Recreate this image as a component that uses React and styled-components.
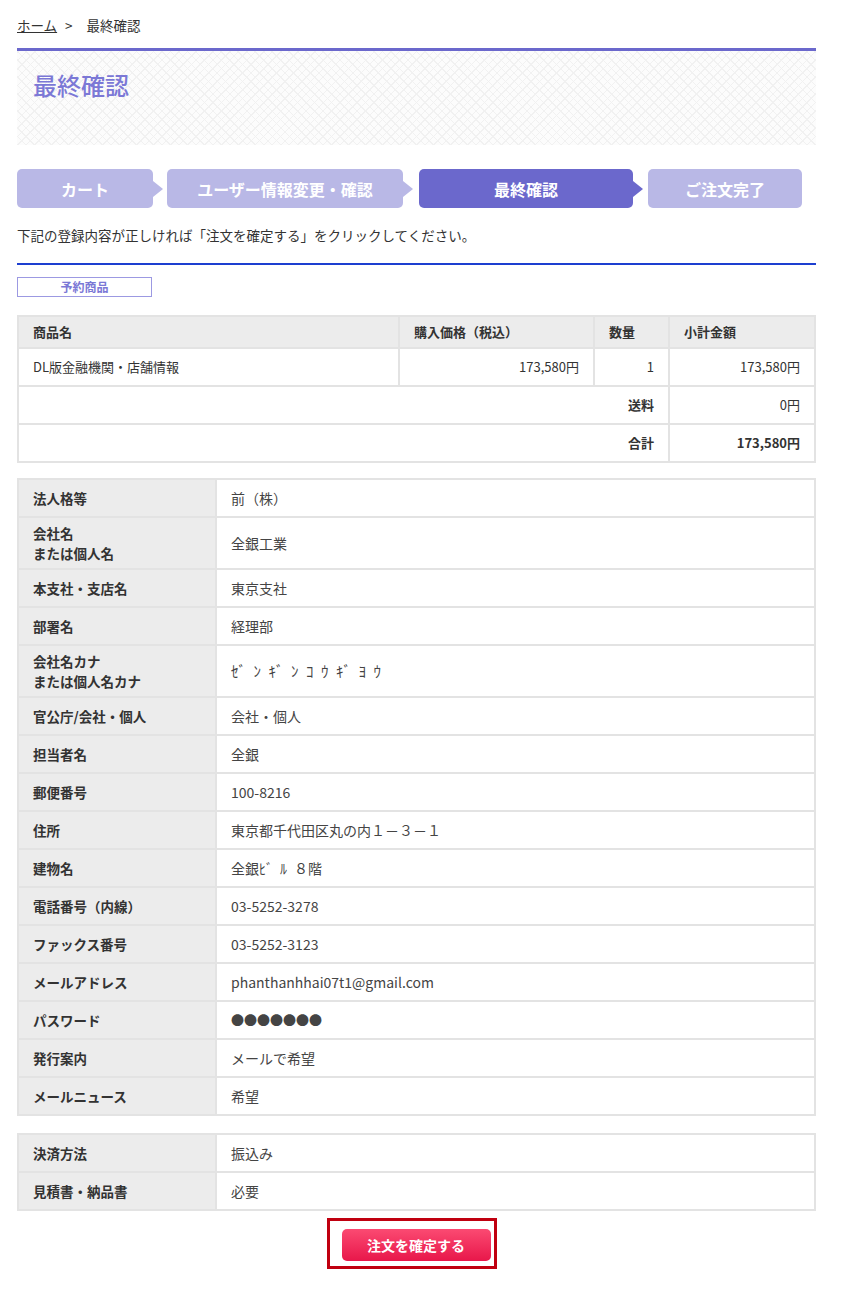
import styled, { createGlobalStyle } from "styled-components";

const GlobalStyle = createGlobalStyle`
  body {
    margin: 0;
    background: #fff;
    color: #333;
    font-family: "Noto Sans CJK JP", "Noto Sans", sans-serif;
  }
`;

const Page = styled.div`
  width: 799px;
  margin-left: 17px;
  padding-bottom: 26px;
`;

const Breadcrumb = styled.div`
  padding-top: 15px;
  font-size: 13.5px;
  line-height: 20px;
  color: #333;
  display: flex;
  gap: 8px;
  a {
    color: #333;
    text-decoration: underline;
  }
  span + span {
    margin-left: 6px;
  }
`;

const TitleBox = styled.div`
  margin-top: 13px;
  height: 97px;
  border-top: 3px solid #6b68cc;
  background-color: #fcfcfc;
  background-image: repeating-linear-gradient(45deg, #f1f1f1 0 1px, transparent 1px 6px),
    repeating-linear-gradient(-45deg, #f1f1f1 0 1px, transparent 1px 6px);
  padding: 18px 16px 0;
  box-sizing: border-box;
`;

const Title = styled.h1`
  margin: 0;
  font-size: 24px;
  line-height: 32px;
  font-weight: 500;
  color: #7b78d6;
`;

const Steps = styled.div`
  display: flex;
  margin-top: 24px;
  height: 39px;
`;

const Step = styled.div`
  position: relative;
  width: ${(p) => p.$w}px;
  margin-right: ${(p) => p.$gap}px;
  border-radius: 5px;
  background: ${(p) => (p.$active ? "#6b68cc" : "#b9b8e6")};
  color: #fff;
  font-weight: 700;
  font-size: 16px;
  display: flex;
  align-items: center;
  justify-content: center;
  &::after {
    content: "";
    display: ${(p) => (p.$last ? "none" : "block")};
    position: absolute;
    right: -10px;
    top: 50%;
    margin-top: -8px;
    border-style: solid;
    border-width: 8px 0 8px 10px;
    border-color: transparent transparent transparent
      ${(p) => (p.$active ? "#6b68cc" : "#b9b8e6")};
  }
`;

const Note = styled.p`
  margin: 17px 0 0;
  font-size: 13.5px;
  line-height: 20px;
`;

const BlueLine = styled.hr`
  margin: 18px 0 0;
  border: 0;
  height: 2px;
  background: #1d3fd0;
`;

const Tag = styled.div`
  margin-top: 12px;
  width: 135px;
  height: 20px;
  box-sizing: border-box;
  border: 1px solid #9c99e2;
  color: #7b78d6;
  font-size: 12px;
  font-weight: 700;
  line-height: 18px;
  text-align: center;
`;

const Table = styled.table`
  width: 100%;
  border-collapse: collapse;
  margin-top: ${(p) => p.$mt}px;
  font-size: ${(p) => p.$fs || 14}px;
  td,
  th {
    border: 2px solid #e3e3e3;
    padding: 5px 14px;
    line-height: 20px;
    vertical-align: middle;
  }
  tr {
    height: 38px;
  }
`;

const Head = styled.tr`
  && {
    height: 31px;
  }
  th {
    background: #ececec;
    text-align: left;
    font-weight: 700;
  }
`;

const Num = styled.td`
  text-align: right;
  font-weight: ${(p) => (p.$bold ? 700 : 400)};
`;

const Label = styled.th`
  width: 168px;
  background: #ececec;
  text-align: left;
  font-weight: 700;
  font-size: 13.5px;
`;

const Value = styled.td`
  color: #444;
  font-size: ${(p) => p.$fs || 14}px;
`;

// half-width kana is drawn full-width in the reference's font
const HalfKana = styled.span`
  letter-spacing: 0.5em;
`;

const ButtonRow = styled.div`
  display: flex;
  justify-content: center;
  margin-top: 7px;
  padding-right: 10px;
`;

const ButtonFrame = styled.div`
  border: 3px solid #c00010;
  padding: 8px 3px 5px 12px;
`;

const ConfirmButton = styled.button`
  width: 149px;
  height: 32px;
  border: 0;
  border-radius: 5px;
  background: linear-gradient(#fb4a72, #e8174a);
  color: #fff;
  font-family: inherit;
  font-size: 14px;
  font-weight: 700;
  cursor: pointer;
`;

const steps = [
  { label: "カート", w: 136, gap: 14 },
  { label: "ユーザー情報変更・確認", w: 236, gap: 16 },
  { label: "最終確認", w: 214, gap: 15, active: true },
  { label: "ご注文完了", w: 154, gap: 0, last: true },
];

const userRows = [
  ["法人格等", "前（株）"],
  [["会社名", "または個人名"], "全銀工業"],
  ["本支社・支店名", "東京支社"],
  ["部署名", "経理部"],
  [["会社名カナ", "または個人名カナ"], <HalfKana>ｾﾞﾝｷﾞﾝｺｳｷﾞﾖｳ</HalfKana>, 15],
  ["官公庁/会社・個人", "会社・個人"],
  ["担当者名", "全銀"],
  ["郵便番号", "100-8216"],
  ["住所", "東京都千代田区丸の内１－３－１"],
  ["建物名", <>全銀<HalfKana>ﾋﾞﾙ</HalfKana>８階</>],
  ["電話番号（内線）", "03-5252-3278"],
  ["ファックス番号", "03-5252-3123"],
  ["メールアドレス", "phanthanhhai07t1@gmail.com"],
  ["パスワード", "●●●●●●●", 13],
  ["発行案内", "メールで希望"],
  ["メールニュース", "希望"],
];

const payRows = [
  ["決済方法", "振込み"],
  ["見積書・納品書", "必要"],
];

const renderLabel = (l) =>
  Array.isArray(l) ? (
    <>
      {l[0]}
      <br />
      {l[1]}
    </>
  ) : (
    l
  );

export default function App() {
  return (
    <Page>
      <GlobalStyle />
      <Breadcrumb>
        <a href="#">ホーム</a>
        <span>&gt;</span>
        <span>最終確認</span>
      </Breadcrumb>

      <TitleBox>
        <Title>最終確認</Title>
      </TitleBox>

      <Steps>
        {steps.map((s) => (
          <Step key={s.label} $w={s.w} $gap={s.gap} $active={s.active} $last={s.last}>
            {s.label}
          </Step>
        ))}
      </Steps>

      <Note>下記の登録内容が正しければ「注文を確定する」をクリックしてください。</Note>
      <BlueLine />
      <Tag>予約商品</Tag>

      <Table $mt={18} $fs={13}>
        <tbody>
          <Head>
            <th style={{ width: 351 }}>商品名</th>
            <th style={{ width: 165 }}>購入価格（税込）</th>
            <th style={{ width: 45 }}>数量</th>
            <th>小計金額</th>
          </Head>
          <tr>
            <td>DL版金融機関・店舗情報</td>
            <Num>173,580円</Num>
            <Num>1</Num>
            <Num>173,580円</Num>
          </tr>
          <tr>
            <Num colSpan={3} $bold>送料</Num>
            <Num>0円</Num>
          </tr>
          <tr>
            <Num colSpan={3} $bold>合計</Num>
            <Num $bold>173,580円</Num>
          </tr>
        </tbody>
      </Table>

      <Table $mt={15}>
        <tbody>
          {userRows.map(([l, v, fs], i) => (
            <tr key={i}>
              <Label>{renderLabel(l)}</Label>
              <Value $fs={fs}>{v}</Value>
            </tr>
          ))}
        </tbody>
      </Table>

      <Table $mt={17}>
        <tbody>
          {payRows.map(([l, v]) => (
            <tr key={l}>
              <Label>{l}</Label>
              <Value>{v}</Value>
            </tr>
          ))}
        </tbody>
      </Table>

      <ButtonRow>
        <ButtonFrame>
          <ConfirmButton>注文を確定する</ConfirmButton>
        </ButtonFrame>
      </ButtonRow>
    </Page>
  );
}
